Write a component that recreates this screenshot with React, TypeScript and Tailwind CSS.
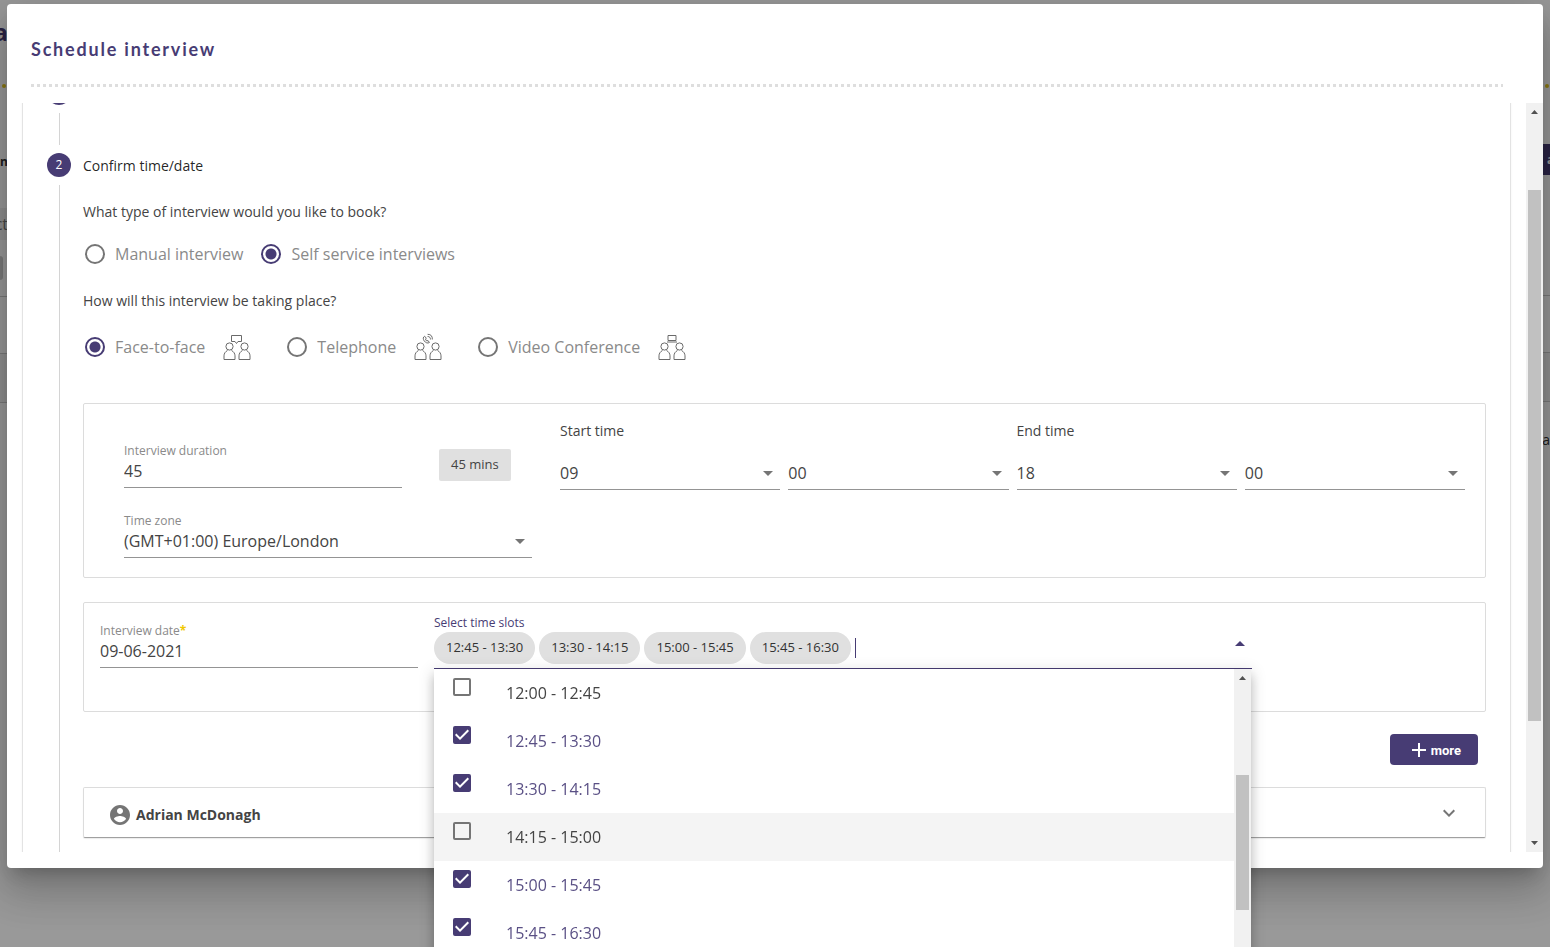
import React, { useState } from "react";

const ALL_SLOTS = [
  "12:00 - 12:45",
  "12:45 - 13:30",
  "13:30 - 14:15",
  "14:15 - 15:00",
  "15:00 - 15:45",
  "15:45 - 16:30",
];

function Caret({ up = false, className = "" }: { up?: boolean; className?: string }) {
  return (
    <svg viewBox="0 0 24 24" className={`w-6 h-6 fill-current ${className}`}>
      <path d={up ? "M7 14l5-5 5 5z" : "M7 10l5 5 5-5z"} />
    </svg>
  );
}

function People({ kind }: { kind: "face" | "phone" | "video" }) {
  return (
    <svg viewBox="0 0 28 28" className="w-7 h-7 fill-none stroke-[#6a6a6a]">
      {[0, 15].map((x) => (
        <g key={x} transform={`translate(${x} 0)`}>
          <circle cx="6.5" cy="13.5" r="3.6" />
          <path d="M4.500 17.500C2.300 18.600 1 20.600 1 22.800V26.500H12V22.800C12 20.600 10.700 18.600 8.500 17.500" />
        </g>
      ))}
      {kind === "face" && <path d="M8.500 2.500h10v6h-3.500l-1.500 2-1.500-2H8.500z" />}
      {kind === "phone" && (
        <g>
          <path d="M10.600 3.200C9 4 8.800 6 10.200 7.900C11.600 9.900 13.800 10.600 15.400 9.500L14 7.500L12.800 8C12.200 7.600 11.600 6.700 11.500 6L12.300 5.200Z" />
          <path d="M13.600 3.500C15.500 3.500 16.600 4.600 16.400 6.500M13.600 1.300C17 1.200 18.600 3.400 18.300 6.500" />
        </g>
      )}
      {kind === "video" && <path d="M10 2.500h8v5h-8zM9 9h10" />}
    </svg>
  );
}

function Radio({ name, label, checked = false, icon }: any) {
  return (
    <label className="flex items-center text-base text-[#8a8a8a]">
      <input
        type="radio"
        name={name}
        defaultChecked={checked}
        className="appearance-none w-5 h-5 mr-2.5 rounded-full border-2 border-[#757575] checked:border-[#473c74] checked:bg-[radial-gradient(circle,#473c74_5px,transparent_6px)]"
      />
      {label}
      {icon && (
        <span className="ml-[18px]">
          <People kind={icon} />
        </span>
      )}
    </label>
  );
}

function TextField({ id, label, value, required = false }: any) {
  return (
    <div className="border-b border-[#949494] pb-1">
      <label htmlFor={id} className="block text-xs leading-4 text-[#8a8a8a]">
        {label}
        {required && <span className="text-[#f0c800] font-bold">*</span>}
      </label>
      <input id={id} defaultValue={value} className="block w-full h-6 text-base text-[#444] outline-none" />
    </div>
  );
}

function SelectField({ label, value }: { label: string; value: string }) {
  return (
    <div className="relative flex-1 border-b border-[#949494]">
      <select aria-label={label} className="appearance-none block w-full h-8 pr-6 text-base text-[#444] outline-none">
        <option>{value}</option>
      </select>
      <Caret className="absolute right-0 top-1 text-[#757575] pointer-events-none" />
    </div>
  );
}

function ScrollTrack({ children, down = false }: any) {
  return (
    <div className="w-[17px] shrink-0 bg-[#f1f1f1] flex flex-col items-center">
      <svg viewBox="0 0 17 17" className="w-[17px] h-[17px] shrink-0 fill-[#505050]">
        <path d="M5 11h7L8.500 7z" />
      </svg>
      {children}
      {down && (
        <svg viewBox="0 0 17 17" className="w-[17px] h-[17px] shrink-0 fill-[#505050]">
          <path d="M5 6h7L8.500 10z" />
        </svg>
      )}
    </div>
  );
}

function StepCircle({ n }: { n: number }) {
  return (
    <div className="w-6 h-6 shrink-0 rounded-full bg-[#473c74] text-white text-xs flex items-center justify-center">
      {n}
    </div>
  );
}

// page that sits under the dialog, only its edges are visible
function PageBehind() {
  return (
    <div className="absolute inset-0 flex justify-between overflow-hidden text-[#333]">
      <div className="w-2 flex flex-col">
        <div className="mt-4 h-8 flex justify-end text-2xl font-bold text-[#473c74]">a</div>
        <div className="mt-9 ml-0.5 w-1 h-1 rounded-full bg-[#e6c820]" />
        <div className="mt-16 h-5 flex justify-end text-xs leading-5 font-bold">n</div>
        <div className="mt-9 h-8 bg-[#eee] flex items-center justify-end text-base text-[#777]">ct</div>
        <div className="mt-4 w-[3px] h-6 rounded-r bg-[#ccc]" />
        <div className="mt-4 h-[57px] border-t border-[#ccc]" />
        <div className="h-[50px] border-y border-[#ccc] bg-[#f0f0f0]" />
      </div>
      <div className="w-[7px] flex flex-col">
        <div className="mt-21 ml-0.5 w-1 h-1 rounded-full bg-[#e6c820]" />
        <div className="mt-14 h-[31px] bg-[#473c74] flex items-center pl-1 text-xs text-white font-bold">a</div>
        <div className="mt-30 h-[57px] border-t border-[#ccc]" />
        <div className="h-[50px] border-y border-[#ccc] bg-[#f0f0f0]" />
        <div className="mt-7 flex justify-end text-sm">ca</div>
      </div>
    </div>
  );
}

function App() {
  const [selected, setSelected] = useState<string[]>([
    "12:45 - 13:30",
    "13:30 - 14:15",
    "15:00 - 15:45",
    "15:45 - 16:30",
  ]);

  const toggle = (slot: string) => {
    setSelected(
      selected.includes(slot)
        ? selected.filter((s) => s !== slot)
        : [...selected, slot].sort()
    );
  };

  return (
    <div className="relative h-screen overflow-hidden bg-white font-['Open_Sans',sans-serif] text-[#444]">
      <PageBehind />
      <div className="relative h-full bg-black/40 flex flex-col px-[7px] pt-1 pb-[79px]">
        <div
          role="dialog"
          aria-labelledby="dialog-title"
          className="flex-1 min-h-0 flex flex-col pb-4 bg-white rounded shadow-[0_11px_15px_-7px_rgba(0,0,0,0.2),0_24px_38px_3px_rgba(0,0,0,0.14),0_9px_46px_8px_rgba(0,0,0,0.12)]"
        >
          <div className="pl-6 pr-10 pt-[31px] pb-4">
            <h2
              id="dialog-title"
              className="font-['Lato',sans-serif] text-lg leading-7 font-bold tracking-widest text-[#473c74]"
            >
              Schedule interview
            </h2>
            <div className="mt-[21px] h-[3px] bg-[repeating-linear-gradient(90deg,#dedede_0_3px,transparent_3px_6px)]" />
          </div>

          <div className="flex-1 min-h-0 flex">
            <div className="flex-1 min-w-0 overflow-hidden px-4">
              <div className="-mt-[22px] px-6 pb-6 rounded shadow-[0_0_0_1px_rgba(0,0,0,0.06),0_1px_1px_0_rgba(0,0,0,0.1),0_1px_3px_0_rgba(0,0,0,0.12)]">
                <StepCircle n={1} />
                <div className="my-2 ml-3 h-8 border-l border-[#d4d4d4]" />
                <div className="flex items-center gap-3 text-sm text-black/87">
                  <StepCircle n={2} />
                  <span className="pt-0.5">Confirm time/date</span>
                </div>

                <div className="mt-2 ml-3 pl-[23px] pt-[17px] pb-8 border-l border-[#d4d4d4]">
                  <p className="text-sm">What type of interview would you like to book?</p>
                  <div className="mt-5 pl-0.5 flex gap-[18px]">
                    <Radio name="type" label="Manual interview" />
                    <Radio name="type" label="Self service interviews" checked />
                  </div>
                  <p className="mt-[25px] text-sm">How will this interview be taking place?</p>
                  <div className="mt-[22px] pl-0.5 flex gap-9">
                    <Radio name="place" label="Face-to-face" icon="face" checked />
                    <Radio name="place" label="Telephone" icon="phone" />
                    <Radio name="place" label="Video Conference" icon="video" />
                  </div>

                  <div className="mt-[42px] pl-10 pr-5 pt-[17px] pb-[19px] grid grid-cols-[408fr_905fr] gap-x-7 border border-[#dcdcdc] rounded-xs">
                    <div className="pt-[22px]">
                      <div className="flex items-start">
                        <div className="w-[278px]">
                          <TextField id="duration" label="Interview duration" value="45" />
                        </div>
                        <button className="ml-[37px] mt-1.5 h-8 px-3 rounded-xs bg-[#e0e0e0] text-[13px]">
                          45 mins
                        </button>
                      </div>
                      <div className="mt-[25px] relative border-b border-[#949494] pb-1">
                        <label htmlFor="zone" className="block text-xs leading-4 text-[#8a8a8a]">
                          Time zone
                        </label>
                        <select id="zone" className="appearance-none block w-full h-6 text-base text-[#444] outline-none">
                          <option>(GMT+01:00) Europe/London</option>
                        </select>
                        <Caret className="absolute right-0 bottom-1 text-[#757575] pointer-events-none" />
                      </div>
                    </div>
                    <div className="grid grid-cols-2 gap-x-2 content-start">
                      <div>
                        <p className="text-sm">Start time</p>
                        <div className="mt-4 flex gap-2">
                          <SelectField label="Start hour" value="09" />
                          <SelectField label="Start minute" value="00" />
                        </div>
                      </div>
                      <div>
                        <p className="text-sm">End time</p>
                        <div className="mt-4 flex gap-2">
                          <SelectField label="End hour" value="18" />
                          <SelectField label="End minute" value="00" />
                        </div>
                      </div>
                    </div>
                  </div>

                  <div className="mt-6 px-4 pt-3 pb-[42px] grid grid-cols-[318fr_818fr_201fr] gap-4 items-start border border-[#dcdcdc] rounded-xs">
                    <div className="pt-2">
                      <TextField id="date" label="Interview date" value="09-06-2021" required />
                    </div>
                    <div>
                      <label htmlFor="slots" className="block text-xs leading-4 text-[#473c74]">
                        Select time slots
                      </label>
                      <div className="mt-px flex items-center gap-1 pb-1 border-b border-[#473c74]">
                        {selected.map((slot) => (
                          <span
                            key={slot}
                            className="h-8 px-3 flex items-center rounded-full bg-[#e0e0e0] text-[13px] text-[#333]"
                          >
                            {slot}
                          </span>
                        ))}
                        <span className="w-px h-5 bg-[#473c74]" />
                        <input id="slots" className="flex-1 min-w-0 h-6 outline-none" />
                        <Caret up className="mb-2 text-[#473c74]" />
                      </div>

                      {/* fixed, so the scroll area does not cut it off */}
                      <div className="fixed z-10 flex w-[calc((100vw-213px)*817/1337)] h-[300px] bg-white shadow-[0_5px_5px_-3px_rgba(0,0,0,0.2),0_8px_10px_1px_rgba(0,0,0,0.14),0_3px_14px_2px_rgba(0,0,0,0.12)]">
                        <ul className="flex-1">
                          {ALL_SLOTS.map((slot) => {
                            const on = selected.includes(slot);
                            return (
                              <li key={slot} className={slot === "14:15 - 15:00" ? "bg-[#f4f4f4]" : ""}>
                                <label
                                  className={`h-12 flex items-center pl-[19px] text-base ${on ? "text-[#5a5085]" : "text-[#444]"}`}
                                >
                                  <span className="relative w-[18px] h-[18px] mr-[35px] mb-3">
                                    <input
                                      type="checkbox"
                                      checked={on}
                                      onChange={() => toggle(slot)}
                                      className="appearance-none block w-[18px] h-[18px] rounded-xs border-2 border-[#757575] checked:bg-[#473c74] checked:border-[#473c74]"
                                    />
                                    {on && (
                                      <svg
                                        viewBox="0 0 18 18"
                                        className="absolute inset-0 fill-white pointer-events-none"
                                      >
                                        <path d="M7 14L2 9l1.400-1.400L7 11.200l7.600-7.600L16 5z" />
                                      </svg>
                                    )}
                                  </span>
                                  {slot}
                                </label>
                              </li>
                            );
                          })}
                        </ul>
                        <ScrollTrack>
                          <div className="mt-[89px] w-[13px] h-[135px] bg-[#c1c1c1]" />
                        </ScrollTrack>
                      </div>
                    </div>
                  </div>

                  <div className="mt-[22px] mr-2 flex justify-end">
                    <button className="h-[31px] pl-[21px] pr-[17px] flex items-center gap-1 rounded bg-[#473c74] text-white font-['Roboto',sans-serif] text-[13px] font-bold">
                      <svg viewBox="0 0 16 16" className="w-4 h-4 fill-none stroke-white stroke-2">
                        <path d="M8 1v14M1 8h14" />
                      </svg>
                      <span className="pt-0.5">more</span>
                    </button>
                  </div>

                  <button className="mt-[22px] w-full h-[51px] px-6 flex items-center border border-[#dcdcdc] border-b-[#a0a0a0] rounded-xs text-sm font-bold shadow-[0_1px_1px_rgba(0,0,0,0.08)]">
                    <span className="flex-1 pt-1 flex items-center gap-1">
                      <svg viewBox="0 0 24 24" className="w-6 h-6 fill-[#757575]">
                        <path d="M12 2C6.480 2 2 6.480 2 12s4.480 10 10 10 10-4.480 10-10S17.520 2 12 2zm0 3c1.660 0 3 1.340 3 3s-1.340 3-3 3-3-1.340-3-3 1.340-3 3-3zm0 14.200c-2.500 0-4.710-1.280-6-3.220.030-1.990 4-3.080 6-3.080 1.990 0 5.970 1.090 6 3.080-1.290 1.940-3.500 3.220-6 3.220z" />
                      </svg>
                      Adrian McDonagh
                    </span>
                    <svg viewBox="0 0 24 24" className="w-6 h-6 fill-[#757575]">
                      <path d="M7.400 8.600L12 13.200l4.600-4.600L18 10l-6 6-6-6z" />
                    </svg>
                  </button>
                </div>
              </div>
            </div>
            <ScrollTrack down>
              <div className="flex-1 w-full flex flex-col items-center">
                <div className="basis-0 grow-70" />
                <div className="basis-0 grow-531 w-[13px] bg-[#c1c1c1]" />
                <div className="basis-0 grow-114" />
              </div>
            </ScrollTrack>
          </div>
        </div>
      </div>
    </div>
  );
}

export default App;
